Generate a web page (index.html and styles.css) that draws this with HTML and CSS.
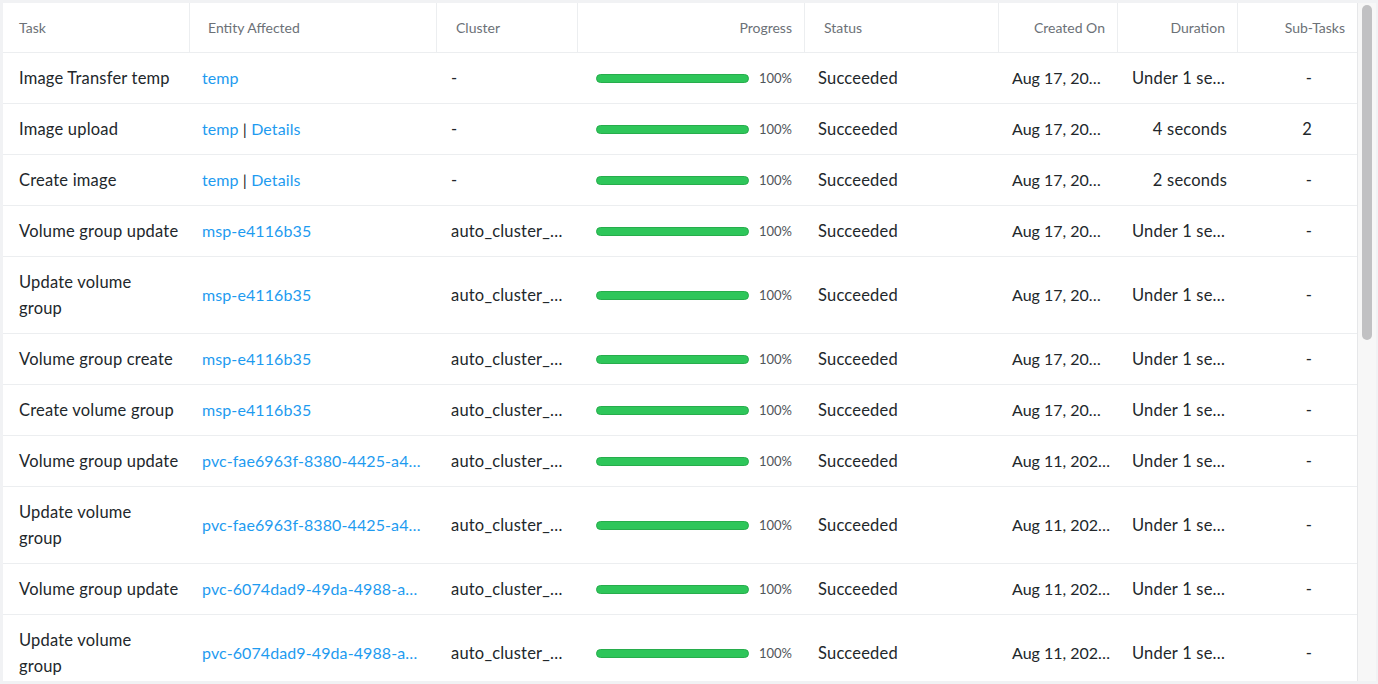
FILE: index.html
```html
<!DOCTYPE html>
<html lang="en">
<head>
<meta charset="utf-8">
<title>Tasks</title>
<link rel="stylesheet" href="styles.css">
</head>
<body>
<div class="page">
  <div class="panel">
    <div class="table-wrap">
      <table class="tasks">
        <colgroup>
          <col class="c-task"><col class="c-entity"><col class="c-cluster"><col class="c-progress">
          <col class="c-status"><col class="c-created"><col class="c-duration"><col class="c-sub">
        </colgroup>
        <thead>
          <tr>
            <th class="h-task">Task</th>
            <th class="h-entity">Entity Affected</th>
            <th class="h-cluster">Cluster</th>
            <th class="h-progress">Progress</th>
            <th class="h-status">Status</th>
            <th class="h-created">Created On</th>
            <th class="h-duration">Duration</th>
            <th class="h-sub">Sub-Tasks</th>
          </tr>
        </thead>
        <tbody>
          <tr>
            <td class="d-task">Image Transfer temp</td>
            <td class="d-entity"><a class="link" href="#">temp</a></td>
            <td class="d-cluster">-</td>
            <td class="d-progress"><div class="progress"><div class="bar"></div><span class="pct">100%</span></div></td>
            <td class="d-status">Succeeded</td>
            <td class="d-created">Aug 17, 20…</td>
            <td class="d-duration trunc">Under 1 se…</td>
            <td class="d-sub">-</td>
          </tr>
          <tr>
            <td class="d-task">Image upload</td>
            <td class="d-entity"><a class="link" href="#">temp</a> | <a class="link" href="#">Details</a></td>
            <td class="d-cluster">-</td>
            <td class="d-progress"><div class="progress"><div class="bar"></div><span class="pct">100%</span></div></td>
            <td class="d-status">Succeeded</td>
            <td class="d-created">Aug 17, 20…</td>
            <td class="d-duration">4 seconds</td>
            <td class="d-sub">2</td>
          </tr>
          <tr>
            <td class="d-task">Create image</td>
            <td class="d-entity"><a class="link" href="#">temp</a> | <a class="link" href="#">Details</a></td>
            <td class="d-cluster">-</td>
            <td class="d-progress"><div class="progress"><div class="bar"></div><span class="pct">100%</span></div></td>
            <td class="d-status">Succeeded</td>
            <td class="d-created">Aug 17, 20…</td>
            <td class="d-duration">2 seconds</td>
            <td class="d-sub">-</td>
          </tr>
          <tr>
            <td class="d-task">Volume group update</td>
            <td class="d-entity"><a class="link" href="#">msp-e4116b35</a></td>
            <td class="d-cluster">auto_cluster_…</td>
            <td class="d-progress"><div class="progress"><div class="bar"></div><span class="pct">100%</span></div></td>
            <td class="d-status">Succeeded</td>
            <td class="d-created">Aug 17, 20…</td>
            <td class="d-duration trunc">Under 1 se…</td>
            <td class="d-sub">-</td>
          </tr>
          <tr>
            <td class="d-task">Update volume<br>group</td>
            <td class="d-entity"><a class="link" href="#">msp-e4116b35</a></td>
            <td class="d-cluster">auto_cluster_…</td>
            <td class="d-progress"><div class="progress"><div class="bar"></div><span class="pct">100%</span></div></td>
            <td class="d-status">Succeeded</td>
            <td class="d-created">Aug 17, 20…</td>
            <td class="d-duration trunc">Under 1 se…</td>
            <td class="d-sub">-</td>
          </tr>
          <tr>
            <td class="d-task">Volume group create</td>
            <td class="d-entity"><a class="link" href="#">msp-e4116b35</a></td>
            <td class="d-cluster">auto_cluster_…</td>
            <td class="d-progress"><div class="progress"><div class="bar"></div><span class="pct">100%</span></div></td>
            <td class="d-status">Succeeded</td>
            <td class="d-created">Aug 17, 20…</td>
            <td class="d-duration trunc">Under 1 se…</td>
            <td class="d-sub">-</td>
          </tr>
          <tr>
            <td class="d-task">Create volume group</td>
            <td class="d-entity"><a class="link" href="#">msp-e4116b35</a></td>
            <td class="d-cluster">auto_cluster_…</td>
            <td class="d-progress"><div class="progress"><div class="bar"></div><span class="pct">100%</span></div></td>
            <td class="d-status">Succeeded</td>
            <td class="d-created">Aug 17, 20…</td>
            <td class="d-duration trunc">Under 1 se…</td>
            <td class="d-sub">-</td>
          </tr>
          <tr>
            <td class="d-task">Volume group update</td>
            <td class="d-entity"><a class="link" href="#">pvc-fae6963f-8380-4425-a4…</a></td>
            <td class="d-cluster">auto_cluster_…</td>
            <td class="d-progress"><div class="progress"><div class="bar"></div><span class="pct">100%</span></div></td>
            <td class="d-status">Succeeded</td>
            <td class="d-created">Aug 11, 202…</td>
            <td class="d-duration trunc">Under 1 se…</td>
            <td class="d-sub">-</td>
          </tr>
          <tr>
            <td class="d-task">Update volume<br>group</td>
            <td class="d-entity"><a class="link" href="#">pvc-fae6963f-8380-4425-a4…</a></td>
            <td class="d-cluster">auto_cluster_…</td>
            <td class="d-progress"><div class="progress"><div class="bar"></div><span class="pct">100%</span></div></td>
            <td class="d-status">Succeeded</td>
            <td class="d-created">Aug 11, 202…</td>
            <td class="d-duration trunc">Under 1 se…</td>
            <td class="d-sub">-</td>
          </tr>
          <tr>
            <td class="d-task">Volume group update</td>
            <td class="d-entity"><a class="link" href="#">pvc-6074dad9-49da-4988-a…</a></td>
            <td class="d-cluster">auto_cluster_…</td>
            <td class="d-progress"><div class="progress"><div class="bar"></div><span class="pct">100%</span></div></td>
            <td class="d-status">Succeeded</td>
            <td class="d-created">Aug 11, 202…</td>
            <td class="d-duration trunc">Under 1 se…</td>
            <td class="d-sub">-</td>
          </tr>
          <tr>
            <td class="d-task">Update volume<br>group</td>
            <td class="d-entity"><a class="link" href="#">pvc-6074dad9-49da-4988-a…</a></td>
            <td class="d-cluster">auto_cluster_…</td>
            <td class="d-progress"><div class="progress"><div class="bar"></div><span class="pct">100%</span></div></td>
            <td class="d-status">Succeeded</td>
            <td class="d-created">Aug 11, 202…</td>
            <td class="d-duration trunc">Under 1 se…</td>
            <td class="d-sub">-</td>
          </tr>
        </tbody>
      </table>
    </div>
    <div class="scrollbar"><div class="thumb"></div></div>
  </div>
</div>
</body>
</html>
```
FILE: styles.css
```css
html, body {
  margin: 0;
  padding: 0;
  background: #f1f2f4;
}
body {
  font-family: "Lato", "Liberation Sans", sans-serif;
  color: #22272b;
}
.page {
  padding: 3px 2px 0 3px;
  height: 684px;
  box-sizing: border-box;
  overflow: hidden;
}
.panel {
  display: flex;
  height: 678px;
  background: #ffffff;
  overflow: hidden;
}
.table-wrap {
  width: 1354px;
  flex: none;
  border-right: 1px solid #e6e7e9;
  overflow: hidden;
}
.scrollbar {
  flex: 1;
  background: #f7f7f7;
  padding: 2px 4px 0 4px;
}
.thumb {
  width: 10px;
  height: 335px;
  border-radius: 5px;
  background: #c1c1c3;
}
.tasks {
  width: 1354px;
  table-layout: fixed;
  border-collapse: separate;
  border-spacing: 0;
}
.c-task { width: 187px; }
.c-entity { width: 247px; }
.c-cluster { width: 141px; }
.c-progress { width: 227px; }
.c-status { width: 194px; }
.c-created { width: 119px; }
.c-duration { width: 120px; }
.c-sub { width: 119px; }

.tasks th {
  font-size: 14px;
  font-weight: 400;
  color: #6c7177;
  line-height: 20px;
  padding: 15px 12px 14px;
  text-align: left;
  border-bottom: 1px solid #eceef0;
  border-right: 1px solid #eceef0;
  white-space: nowrap;
  overflow: hidden;
}
.tasks th:last-child { border-right: none; }
.tasks td {
  font-size: 16.5px;
  letter-spacing: 0.2px;
  line-height: 26px;
  padding: 12px 12px;
  border-bottom: 1px solid #eceef0;
  white-space: nowrap;
  overflow: hidden;
  vertical-align: middle;
}
.h-task { padding-left: 16px !important; }
.h-entity { padding-left: 18px !important; }
.h-cluster { padding-left: 19px !important; }
.h-progress { text-align: right !important; }
.h-status { padding-left: 19px !important; }
.h-created, .h-duration, .h-sub { text-align: right !important; }

.d-task { padding-left: 16px !important; padding-right: 4px !important; white-space: normal !important; }
.d-entity { padding-left: 12px !important; padding-right: 4px !important; font-size: 16px !important; letter-spacing: 0.1px !important; }
.d-cluster { padding-left: 14px !important; }
.d-progress { padding-left: 18px !important; }
.d-status { padding-left: 13px !important; }
.d-created { padding-left: 13px !important; padding-right: 2px !important; font-size: 16px !important; letter-spacing: 0 !important; }
.d-duration { text-align: right; padding-right: 11px !important; padding-left: 14px !important; }
.d-duration.trunc { text-align: left; }
.d-sub { text-align: right; padding-right: 45px !important; }

.link {
  color: #1e9bf0;
  text-decoration: none;
}
.progress {
  display: flex;
  align-items: center;
  gap: 10px;
}
.bar {
  width: 151px;
  height: 7px;
  border-radius: 5px;
  background: #2ec65a;
  border: 1px solid #27ad4c;
}
.pct {
  font-size: 13px;
  letter-spacing: 0;
  color: #50555a;
  line-height: 16px;
}
```
